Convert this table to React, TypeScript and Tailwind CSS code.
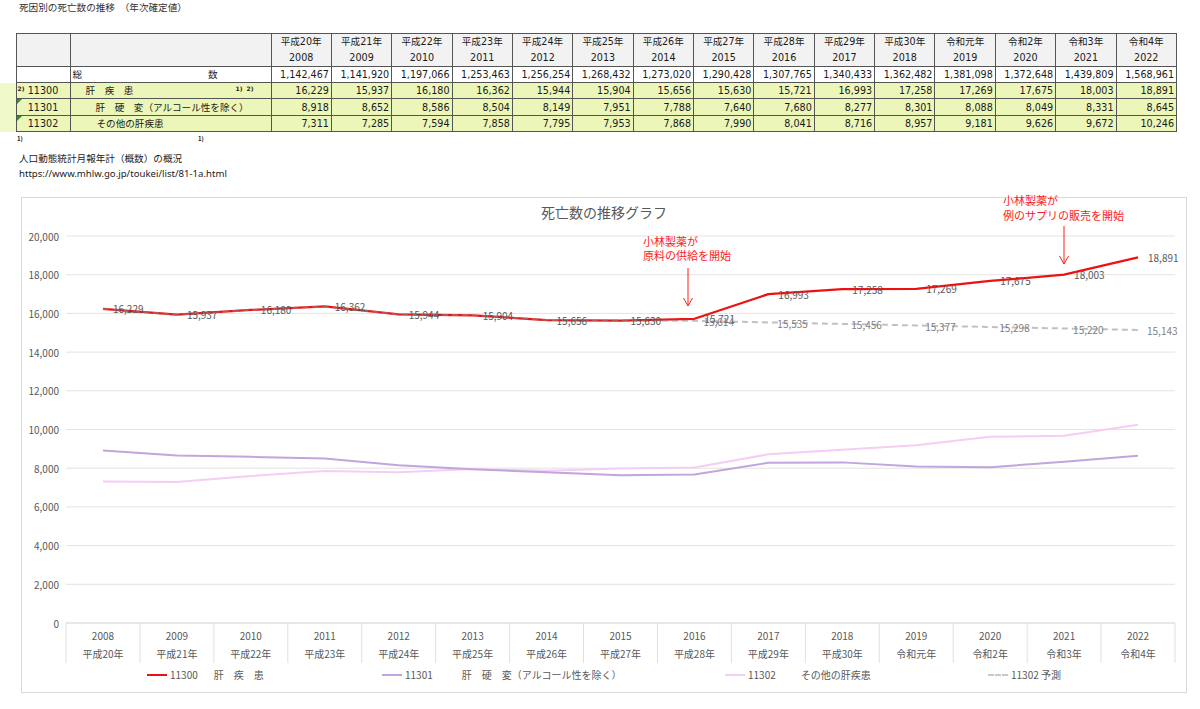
import React from 'react';

const years = [2008, 2009, 2010, 2011, 2012, 2013, 2014, 2015, 2016, 2017, 2018, 2019, 2020, 2021, 2022];
const eras = [
  '平成20年', '平成21年', '平成22年', '平成23年', '平成24年', '平成25年', '平成26年', '平成27年',
  '平成28年', '平成29年', '平成30年', '令和元年', '令和2年', '令和3年', '令和4年',
];
const total = [
  1142467, 1141920, 1197066, 1253463, 1256254, 1268432, 1273020, 1290428, 1307765, 1340433, 1362482,
  1381098, 1372648, 1439809, 1568961,
];
const liver = [16229, 15937, 16180, 16362, 15944, 15904, 15656, 15630, 15721, 16993, 17258, 17269, 17675, 18003, 18891];
const cirrhosis = [8918, 8652, 8586, 8504, 8149, 7951, 7788, 7640, 7680, 8277, 8301, 8088, 8049, 8331, 8645];
const other = [7311, 7285, 7594, 7858, 7795, 7953, 7868, 7990, 8041, 8716, 8957, 9181, 9626, 9672, 10246];
const forecast = [...liver.slice(0, 8), 15614, 15535, 15456, 15377, 15298, 15220, 15143];

const fmt = (v: number) => v.toLocaleString('en-US');

// chart coordinates are page pixels (viewBox is offset to the svg's position)
const X = (i: number) => 66 + 73.933 * (i + 0.5);
const Y = (v: number) => 622 - v * 0.01935;
const pts = (arr: number[]) => arr.map((v, i) => `${X(i)},${Y(v)}`).join(' ');

const rows = [
  { code: '11300', label: '肝　疾　患', pl: 'pl-[15px]', values: liver, mark: true },
  { code: '11301', label: '肝　硬　変（アルコール性を除く）', pl: 'pl-[25px]', values: cirrhosis, mark: false },
  { code: '11302', label: 'その他の肝疾患', pl: 'pl-[26px]', values: other, mark: false },
];

function Tiny({ children, className }: { children: React.ReactNode; className: string }) {
  return <span className={`absolute text-[6px] leading-[6px] font-bold text-[#222] ${className}`}>{children}</span>;
}

function DataTable() {
  const cell = 'border border-[#555] p-0';
  return (
    <table className="border-collapse table-fixed w-[1177px] text-[9.6px] text-[#1a1a1a] font-['DejaVu_Sans','Noto_Sans_CJK_JP',sans-serif]">
      <colgroup>
        <col className="w-[16px]" />
        <col className="w-[54px]" />
        <col className="w-[201px]" />
        {years.map((y) => (
          <col key={y} />
        ))}
      </colgroup>
      <tbody>
        <tr className="h-[33px]">
          <td className="p-0" />
          <td className={`${cell} bg-[#f2f2f2]`} />
          <td className={`${cell} bg-[#f2f2f2]`} />
          {years.map((y, i) => (
            <td key={y} className={`${cell} bg-[#f2f2f2] text-center leading-[16px]`}>
              <div>{eras[i]}</div>
              <div>{y}</div>
            </td>
          ))}
        </tr>
        <tr className="h-[16px]">
          <td className="p-0" />
          <td className={cell} />
          <td className={`${cell} leading-[15px]`}>
            <div className="flex justify-between pl-[2px] pr-[53px]">
              <span>総</span>
              <span>数</span>
            </div>
          </td>
          {total.map((v, i) => (
            <td key={i} className={`${cell} text-right pr-[2px] leading-[15px]`}>
              {fmt(v)}
            </td>
          ))}
        </tr>
        {rows.map((r, ri) => (
          <tr key={r.code} className={ri === 1 ? 'h-[17px]' : 'h-[16px]'}>
            <td className="p-0 bg-[#eff8c8]" />
            <td className={`${cell} bg-[#ebf6b8] text-center leading-[15px] relative`}>
              {r.mark ? (
                <Tiny className="left-[1px] top-[3px]">2)</Tiny>
              ) : (
                <span className="absolute left-0 top-0 w-0 h-0 border-t-[5px] border-r-[5px] border-t-[#2f8f2f] border-r-transparent" />
              )}
              {r.code}
            </td>
            <td className={`${cell} bg-[#ebf6b8] leading-[15px] relative ${r.pl}`}>
              {r.label}
              {r.mark && (
                <>
                  <Tiny className="left-[165px] top-[3px]">1)</Tiny>
                  <Tiny className="left-[176px] top-[3px]">2)</Tiny>
                </>
              )}
            </td>
            {r.values.map((v, i) => (
              <td key={i} className={`${cell} bg-[#ebf6b8] text-right pr-[2px] leading-[15px]`}>
                {fmt(v)}
              </td>
            ))}
          </tr>
        ))}
      </tbody>
    </table>
  );
}

function Chart() {
  const grid = [0, 2000, 4000, 6000, 8000, 10000, 12000, 14000, 16000, 18000, 20000];
  return (
    <svg width={1164} height={442} viewBox="22 221 1164 442" className="block">
      {grid.map((g) => (
        <g key={g}>
          <line x1={66} x2={1175} y1={Y(g)} y2={Y(g)} stroke={g === 0 ? '#d0d0d0' : '#e3e3e3'} strokeWidth={1} />
          <text x={59} y={Y(g)} textAnchor="end" dominantBaseline="central" fontSize={10} fill="#595959">
            {fmt(g)}
          </text>
        </g>
      ))}
      {Array.from({ length: 16 }, (_, k) => (
        <line key={k} x1={66 + 73.933 * k} x2={66 + 73.933 * k} y1={622} y2={662} stroke="#e0e0e0" strokeWidth={1} />
      ))}
      {years.map((y, i) => (
        <g key={y}>
          <text x={X(i)} y={634} textAnchor="middle" dominantBaseline="central" fontSize={10} fill="#595959">
            {y}
          </text>
          <text x={X(i)} y={652} textAnchor="middle" dominantBaseline="central" fontSize={10} fill="#595959">
            {eras[i]}
          </text>
        </g>
      ))}

      <polyline points={pts(other)} fill="none" stroke="#f6cdf3" strokeWidth={2} />
      <polyline points={pts(cirrhosis)} fill="none" stroke="#c1a5dc" strokeWidth={2} />
      <polyline points={pts(liver)} fill="none" stroke="#ee1111" strokeWidth={2.25} strokeLinejoin="round" />
      <polyline
        points={pts(forecast)}
        fill="none"
        stroke="#8c8c8c"
        strokeOpacity={0.55}
        strokeWidth={2}
        strokeDasharray="6 4"
      />

      {liver.map((v, i) => (
        <text key={i} x={X(i) + 10} y={Y(v)} dominantBaseline="central" fontSize={10} fill="#595959">
          {fmt(v)}
        </text>
      ))}
      {forecast.slice(8).map((v, i) => (
        <text key={i} x={X(i + 8) + 9} y={Y(v) + 1} dominantBaseline="central" fontSize={10} fill="#7f7f7f">
          {fmt(v)}
        </text>
      ))}

      {/* annotation arrows */}
      <line x1={688} x2={688} y1={267} y2={305} stroke="#ff2020" strokeWidth={1} />
      <polyline points="683.5,297 688,305 692.5,297" fill="none" stroke="#ff2020" strokeWidth={1} />
      <line x1={1064} x2={1064} y1={225} y2={263} stroke="#ff2020" strokeWidth={1} />
      <polyline points="1059.5,255 1064,263 1068.5,255" fill="none" stroke="#ff2020" strokeWidth={1} />
    </svg>
  );
}

function LegendItem({ width, line, children }: { width: string; line: React.ReactNode; children: React.ReactNode }) {
  return (
    <div className={`flex items-center gap-[3px] ${width}`}>
      {line}
      {children}
    </div>
  );
}

export default function App() {
  return (
    <div className="relative w-[1200px] h-[709px] bg-white overflow-hidden font-['Noto_Sans_CJK_JP',sans-serif]">
      <div className="h-[14px] pl-[19px] text-[9.6px] leading-[14px] text-[#333]">死因別の死亡数の推移　（年次確定値）</div>

      <div className="mt-[19px]">
        <DataTable />
      </div>

      <div className="relative h-[12px]">
        <Tiny className="left-[17px] top-[4px]">1)</Tiny>
        <Tiny className="left-[198px] top-[4px]">1)</Tiny>
      </div>

      <div className="mt-[7px] pl-[19px] text-[9.6px] leading-[15px] text-[#222]">
        <div>人口動態統計月報年計（概数）の概況</div>
        <div className="font-['Noto_Sans',sans-serif]">https://www.mhlw.go.jp/toukei/list/81-1a.html</div>
      </div>

      <div className="relative mt-[16px] ml-[21px] w-[1166px] h-[496px] border border-[#d9d9d9]">
        <div className="h-[24px] pt-[4px] text-center text-[14px] leading-[20px] text-[#595959]">死亡数の推移グラフ</div>
        <Chart />
        <div className="flex h-[22px] pl-[125px] text-[10px] leading-[22px] text-[#595959]">
          <LegendItem width="w-[235px]" line={<span className="w-[20px] h-[2px] bg-[#ee1111]" />}>
            <span>11300</span>
            <span className="ml-[13px]">肝　疾　患</span>
          </LegendItem>
          <LegendItem width="w-[343px]" line={<span className="w-[20px] h-[2px] bg-[#c1a5dc]" />}>
            <span>11301</span>
            <span className="ml-[26px]">肝　硬　変（アルコール性を除く）</span>
          </LegendItem>
          <LegendItem width="w-[263px]" line={<span className="w-[20px] h-[2px] bg-[#f6cdf3]" />}>
            <span>11302</span>
            <span className="ml-[22px]">その他の肝疾患</span>
          </LegendItem>
          <LegendItem
            width="w-[100px]"
            line={<span className="w-[20px] h-0 border-t-2 border-dashed border-[#c8c8c8]" />}
          >
            <span>11302 予測</span>
          </LegendItem>
        </div>

        <div className="absolute left-[621px] top-[36px] text-[11px] leading-[14px] text-[#ff1a1a]">
          <div>小林製薬が</div>
          <div>原料の供給を開始</div>
        </div>
        <div className="absolute left-[981px] top-[-5px] text-[11px] leading-[15px] text-[#ff1a1a]">
          <div>小林製薬が</div>
          <div>例のサプリの販売を開始</div>
        </div>
      </div>
    </div>
  );
}
